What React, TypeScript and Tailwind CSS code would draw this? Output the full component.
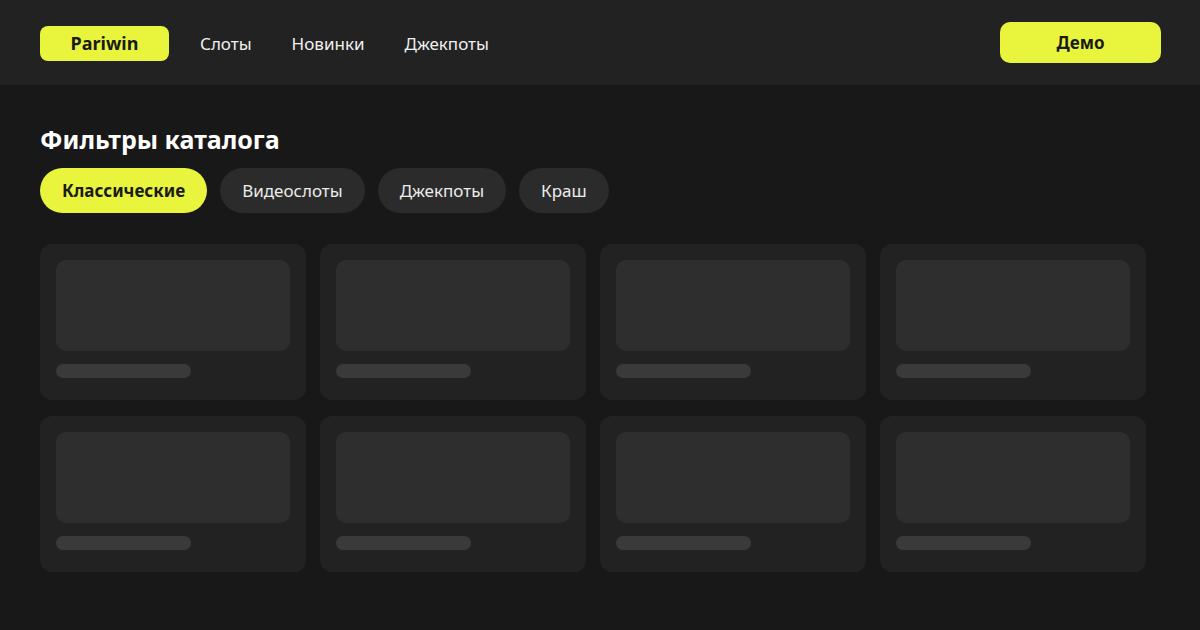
import React from "react";

const navLinks = ["Слоты", "Новинки", "Джекпоты"];
const filters = ["Классические", "Видеослоты", "Джекпоты", "Краш"];

const SkeletonCard = () => (
  <div className="flex flex-col rounded-xl bg-[#222222] px-4 pt-4 pb-[22px]">
    <div className="h-[91px] rounded-[10px] bg-[#2e2e2e]" />
    <div className="mt-[13px] h-[14px] w-[135px] rounded-full bg-[#3a3a3a]" />
  </div>
);

export default function App() {
  return (
    <div
      className="min-h-[630px] w-full bg-[#181818] text-white"
      style={{ fontFamily: '"Noto Sans", "Open Sans", sans-serif' }}
    >
      {/* header */}
      <header className="flex h-[85px] items-center justify-between bg-[#222222] pt-[2px] pl-10 pr-[39px]">
        <div className="flex items-center">
          <a className="flex h-[35px] w-[129px] items-center justify-center rounded-lg bg-[#e8f53c] text-[18px] font-bold text-[#1a1a1a]">
            Pariwin
          </a>
          <nav className="ml-[31px] flex items-center gap-10">
            {navLinks.map((l) => (
              <a key={l} className="text-[17px] text-[#f0f0f0]">
                {l}
              </a>
            ))}
          </nav>
        </div>
        <button className="-mt-[2px] flex h-[41px] w-[161px] items-center justify-center rounded-[10px] bg-[#e8f53c] text-[17px] font-bold text-[#1a1a1a]">
          Демо
        </button>
      </header>

      <main className="px-10 pt-[38px]">
        <h1 className="text-[25px] leading-8 font-bold">Фильтры каталога</h1>
        <div className="mt-[13px] flex gap-[13px]">
          {filters.map((f, i) => (
            <button
              key={f}
              className={
                i === 0
                  ? "flex h-[45px] items-center rounded-full bg-[#e8f53c] px-[22px] text-[17px] font-bold text-[#1a1a1a]"
                  : "flex h-[45px] items-center rounded-full bg-[#2b2b2b] px-[22px] text-[17px] text-[#ececec]"
              }
            >
              {f}
            </button>
          ))}
        </div>

        <div className="mt-[31px] grid grid-cols-[repeat(4,266px)] gap-x-[14px] gap-y-4">
          {Array.from({ length: 8 }).map((_, i) => (
            <SkeletonCard key={i} />
          ))}
        </div>
      </main>
    </div>
  );
}
